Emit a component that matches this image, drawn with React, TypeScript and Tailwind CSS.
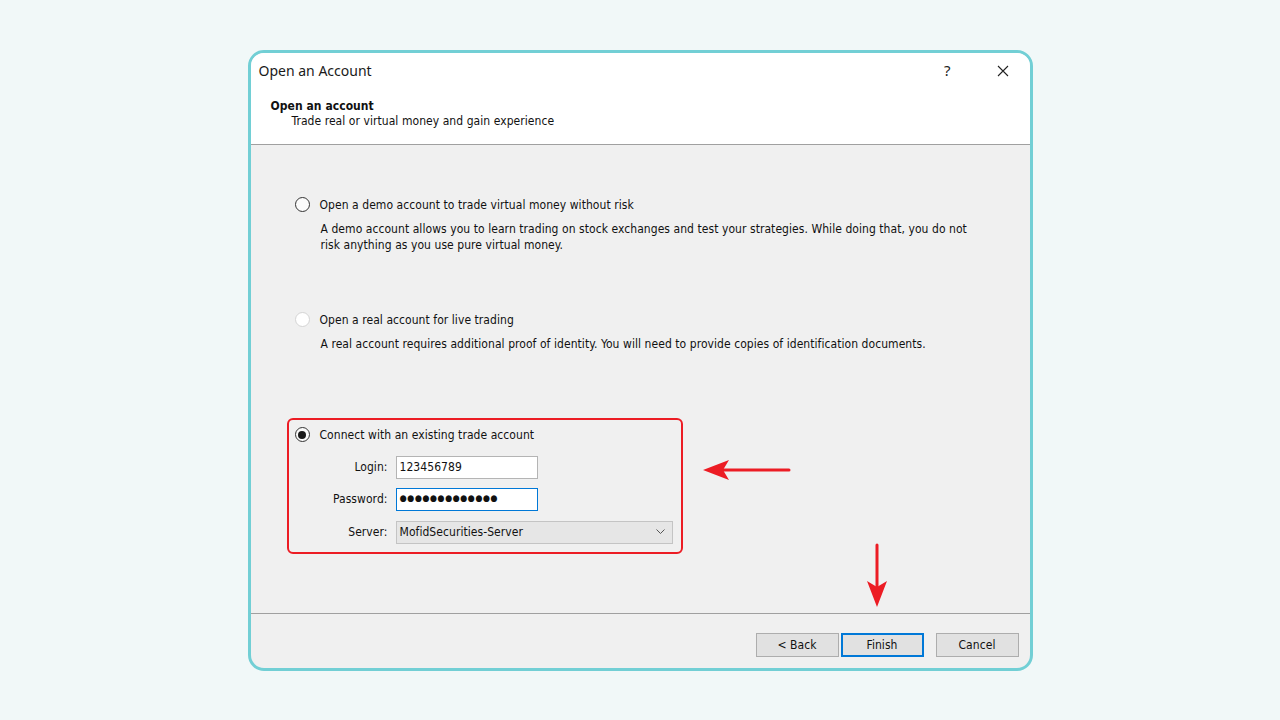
import React from 'react';

const ui = { fontFamily: '"DejaVu Sans Condensed", "DejaVu Sans", Tahoma, sans-serif', letterSpacing: '0.06px' };
const title = { fontFamily: '"Noto Sans", "Liberation Sans", sans-serif', letterSpacing: '0px' };

function Radio({ state }: { state: 'off' | 'disabled' | 'on' }) {
  const ring = state === 'disabled' ? 'border-[#d4d4d4] bg-white' : 'border-[#333333] bg-[#fbfbfb]';
  return (
    <span className={`flex h-[15px] w-[15px] shrink-0 items-center justify-center rounded-full border ${ring}`}>
      {state === 'on' && <span className="h-[8px] w-[8px] rounded-full bg-[#1a1a1a]" />}
    </span>
  );
}

function Field({ label, children }: { label: string; children: React.ReactNode }) {
  return (
    <div className="flex items-center">
      <span className="w-[94px] pr-[1px] text-right">{label}</span>
      <span className="ml-[7px]">{children}</span>
    </div>
  );
}

function Btn({ label, primary }: { label: string; primary?: boolean }) {
  return (
    <button
      className={`flex h-[24px] w-[83px] items-center justify-center bg-[#e1e1e1] text-[12px] text-[#111] ${
        primary ? 'border-2 border-[#0078d7]' : 'border border-[#adadad]'
      }`}
    >
      {label}
    </button>
  );
}

export default function App() {
  return (
    <div className="flex h-[720px] w-full items-center justify-center bg-[#f1f8f8]" style={ui}>
      <div className="relative flex h-[621px] w-[785px] flex-col overflow-hidden rounded-[16px] border-[3px] border-[#72cfd5] bg-[#f0f0f0] text-[12px] text-[#111]">
        {/* header */}
        <div className="h-[92px] shrink-0 border-b border-[#a0a0a0] bg-white">
          <div className="flex h-[36px] items-center pl-[8px] pr-[21px]">
            <span className="text-[14px] text-[#1a1a1a]" style={title}>Open an Account</span>
            <span className="ml-auto mr-[46px] text-[15px] text-[#222]" style={title}>?</span>
            <svg width="12" height="12" viewBox="0 0 12 12">
              <path d="M1 1 L11 11 M11 1 L1 11" stroke="#222" strokeWidth="1.1" />
            </svg>
          </div>
          <div className="mt-[10px] pl-[20px] leading-[15px]">
            <div className="font-bold">Open an account</div>
            <div className="pl-[21px]">Trade real or virtual money and gain experience</div>
          </div>
        </div>

        {/* body */}
        <div className="flex flex-1 flex-col">
          <div className="mt-[52px] pl-[44px]">
            <div className="flex h-[16px] items-center gap-[10px]">
              <Radio state="off" />
              <span>Open a demo account to trade virtual money without risk</span>
            </div>
            <p className="ml-[26px] mt-[8px] w-[660px] leading-[16px]">
              A demo account allows you to learn trading on stock exchanges and test your strategies. While doing that, you do not risk anything as you use pure virtual money.
            </p>
          </div>

          <div className="mt-[59px] pl-[44px]">
            <div className="flex h-[16px] items-center gap-[10px]">
              <Radio state="disabled" />
              <span>Open a real account for live trading</span>
            </div>
            <p className="ml-[26px] mt-[8px] leading-[16px]">
              A real account requires additional proof of identity. You will need to provide copies of identification documents.
            </p>
          </div>

          <div className="ml-[36px] mt-[66px] w-[396px] rounded-[6px] border-2 border-[#ec1c24] pb-[8px] pl-[6px] pt-[7px]">
            <div className="flex h-[16px] items-center gap-[10px]">
              <Radio state="on" />
              <span>Connect with an existing trade account</span>
            </div>
            <div className="mt-[13px] flex flex-col">
              <Field label="Login:">
                <span className="flex h-[23px] w-[142px] items-center border border-[#b4b4b4] bg-white pl-[3px]">123456789</span>
              </Field>
              <div className="mt-[9px]">
                <Field label="Password:">
                  <span className="flex h-[23px] w-[142px] items-center border border-[#0078d7] bg-white pl-[3px] text-[9px] tracking-[0.5px]">
                    ●●●●●●●●●●●●●
                  </span>
                </Field>
              </div>
              <div className="mt-[10px]">
                <Field label="Server:">
                  <span className="flex h-[23px] w-[277px] items-center border border-[#c4c4c4] bg-[#e6e6e6] pl-[3px] pr-[7px]">
                    <span>MofidSecurities-Server</span>
                    <svg width="9" height="6" viewBox="0 0 9 6" className="ml-auto">
                      <path d="M0.5 0.5 L4.5 4.5 L8.5 0.5" fill="none" stroke="#555" strokeWidth="1" />
                    </svg>
                  </span>
                </Field>
              </div>
            </div>
          </div>
        </div>

        {/* footer */}
        <div className="flex h-[55px] shrink-0 items-start justify-end border-t border-[#a0a0a0] pr-[11px] pt-[19px]">
          <Btn label="< Back" />
          <span className="ml-[2px]"><Btn label="Finish" primary /></span>
          <span className="ml-[12px]"><Btn label="Cancel" /></span>
        </div>

        {/* annotation arrows */}
        <svg className="absolute left-[450px] top-[404px]" width="92" height="26" viewBox="0 0 92 26">
          <path d="M88 13 L20 13" stroke="#ec1c24" strokeWidth="3" strokeLinecap="round" />
          <path d="M2 13 L28 3 L22 13 L28 23 Z" fill="#ec1c24" />
        </svg>
        <svg className="absolute left-[614px] top-[490px]" width="24" height="66" viewBox="0 0 24 66">
          <path d="M12 2 L12 44" stroke="#ec1c24" strokeWidth="3" strokeLinecap="round" />
          <path d="M12 64 L2 38 L12 44 L22 38 Z" fill="#ec1c24" />
        </svg>
      </div>
    </div>
  );
}
